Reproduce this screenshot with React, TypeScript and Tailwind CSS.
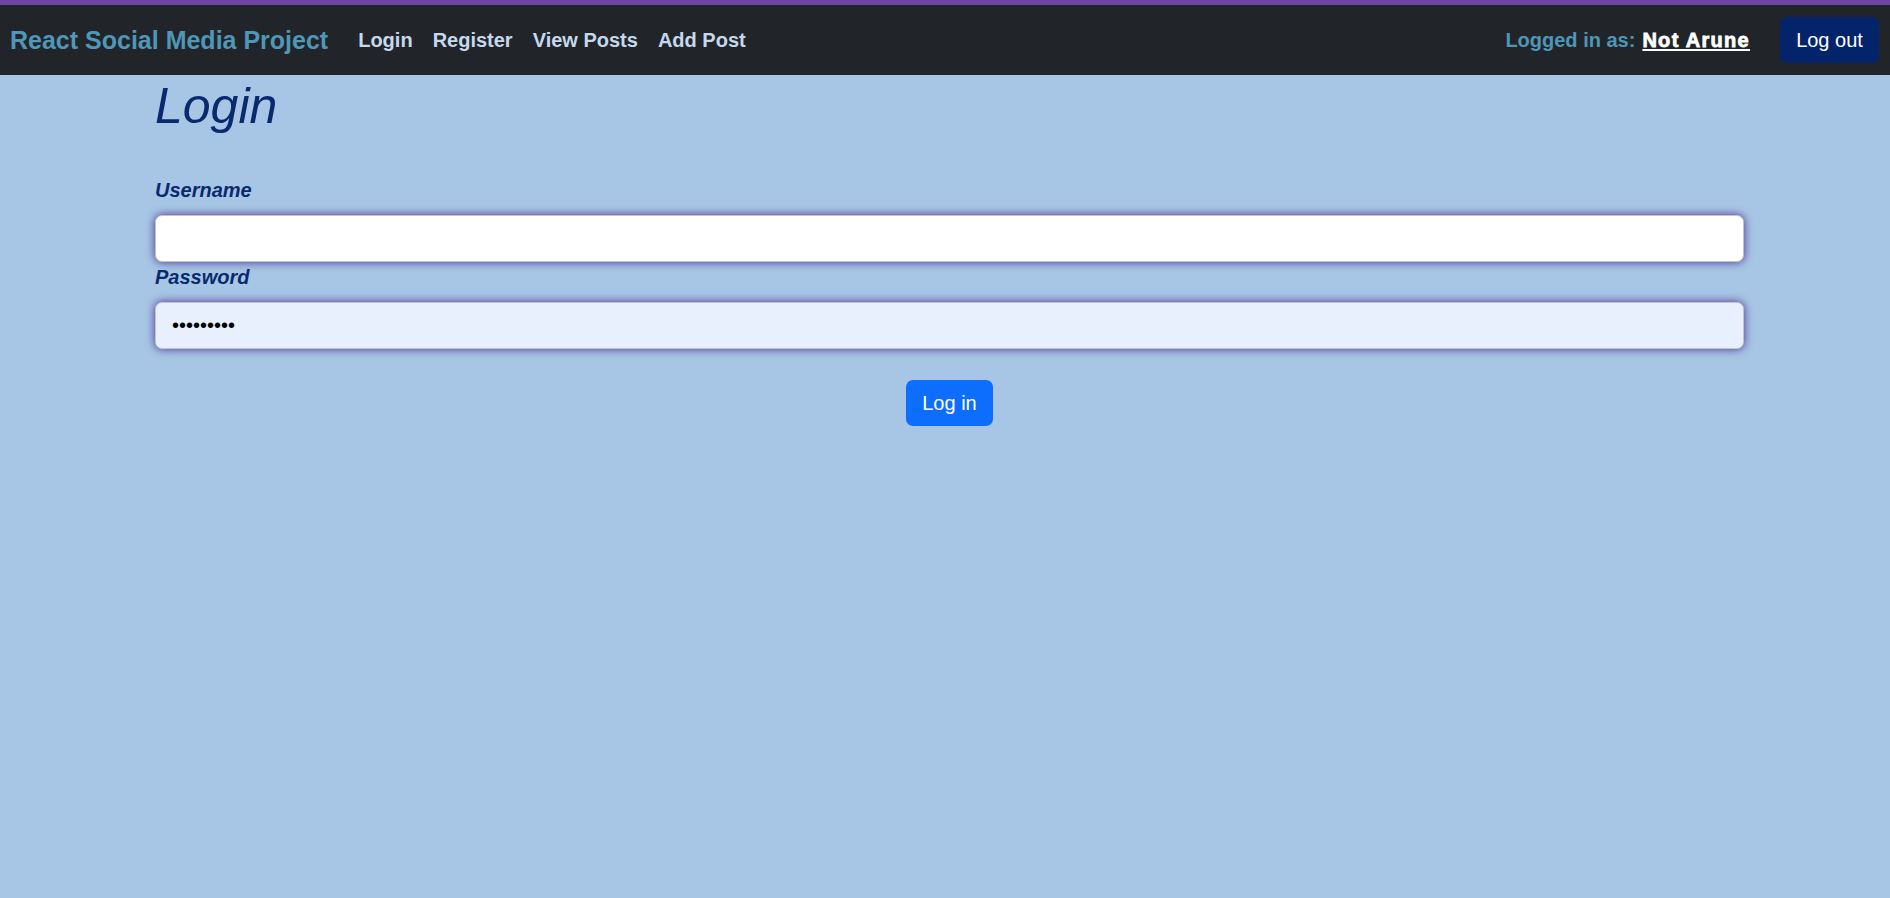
import React from "react";

export default function App() {
  return (
    <div className="min-h-[898px] bg-[#a7c6e5] font-['Liberation_Sans',Arial,sans-serif]">
      <nav className="flex h-[75px] items-center border-t-[5px] border-[#6f44a6] bg-[#212529] pl-[10px] pr-[11px]">
        <span className="mr-[20px] text-[25px] font-bold leading-[30px] text-[#4f97b8]">
          React Social Media Project
        </span>
        <div className="flex items-center">
          {["Login", "Register", "View Posts", "Add Post"].map((t) => (
            <a key={t} className="px-[10px] text-[20px] font-bold leading-[30px] text-[#c6d9ec]">
              {t}
            </a>
          ))}
        </div>
        <div className="ml-auto flex items-center">
          <span className="text-[20px] font-bold leading-[30px] text-[#4f97b8]">Logged in as: </span>
          <span className="ml-[7px] text-[20px] font-bold leading-[30px] tracking-[1.3px] text-white underline decoration-2 underline-offset-2 [-webkit-text-stroke:0.8px_white]">
            Not Arune
          </span>
          <button className="ml-[30px] h-[46px] w-[99px] rounded-[7px] bg-[#03236b] text-[20px] leading-[30px] text-white">
            Log out
          </button>
        </div>
      </nav>
      <main className="ml-[155px] w-[1589px] pt-px">
        <h1 className="text-[50px] italic leading-[60px] text-[#0a2a6e]">Login</h1>
        <form className="mt-[39px] flex flex-col">
          <label className="text-[20px] font-bold italic leading-[30px] text-[#0a2a6e]">Username</label>
          <input
            type="text"
            className="mt-[10px] h-[47px] rounded-[7px] border border-[#c3c3c9] bg-white px-[16px] text-[20px] shadow-[0_0_10px_rgba(70,45,145,1)] outline-none"
          />
          <label className="text-[20px] font-bold italic leading-[30px] text-[#0a2a6e]">Password</label>
          <input
            type="password"
            defaultValue="123456789"
            className="mt-[10px] h-[47px] rounded-[7px] border border-[#c3c3c9] bg-[#e8f0fe] px-[16px] text-[20px] text-black shadow-[0_0_10px_rgba(70,45,145,1)] outline-none"
          />
          <div className="mt-[31px] flex justify-center">
            <button
              type="button"
              className="h-[46px] w-[87px] rounded-[7px] bg-[#0d6efd] text-[20px] leading-[30px] text-white"
            >
              Log in
            </button>
          </div>
        </form>
      </main>
    </div>
  );
}
